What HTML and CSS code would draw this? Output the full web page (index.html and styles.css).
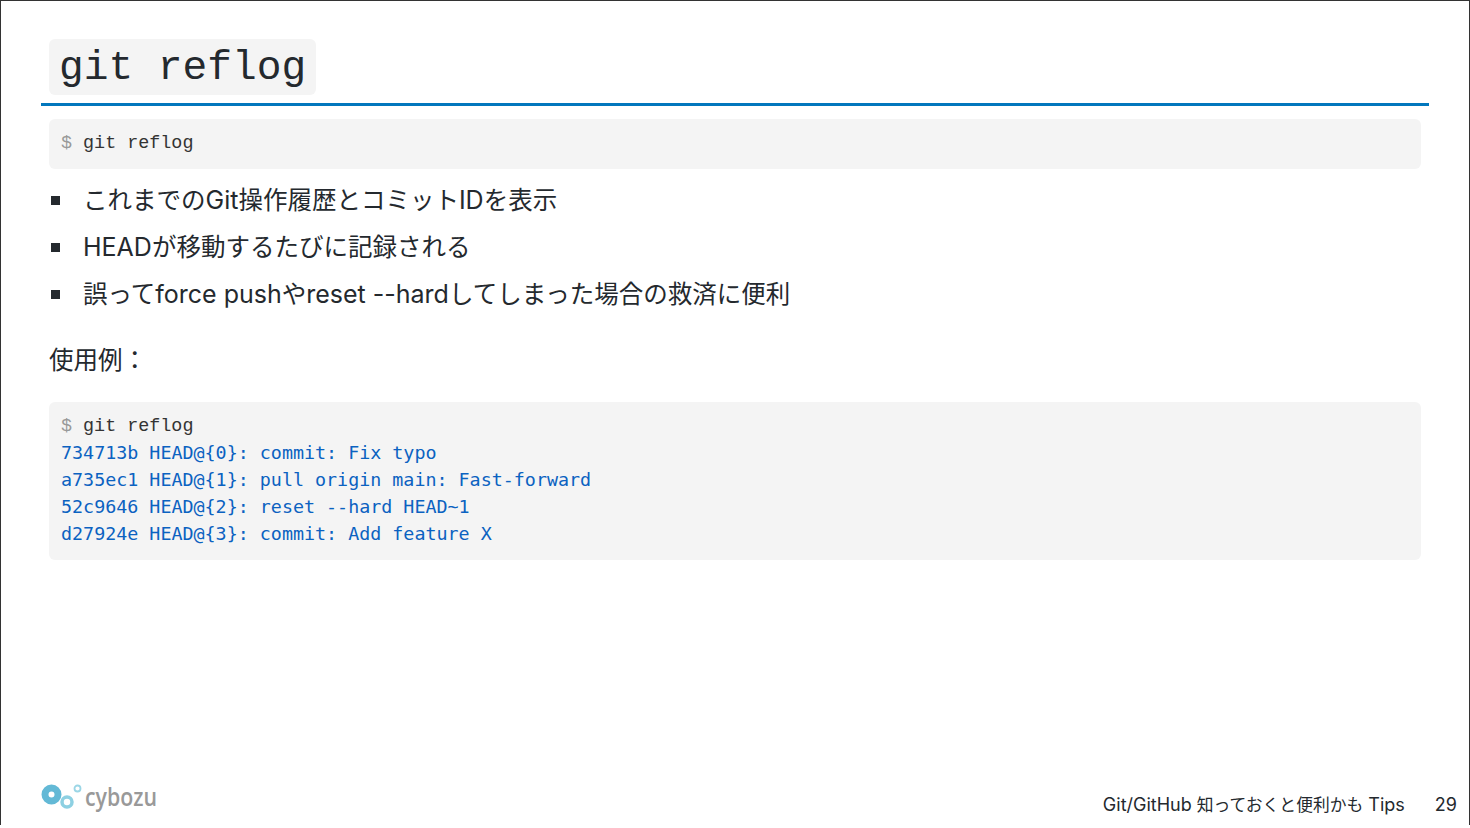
FILE: index.html
```html
<!DOCTYPE html>
<html lang="ja">
<head>
<meta charset="utf-8">
<title>git reflog</title>
<link rel="stylesheet" href="styles.css">
</head>
<body>
<section class="slide">
  <main class="content">
    <h1 class="heading"><code class="heading-code">git reflog</code></h1>
    <pre class="code code-short"><span class="prompt">$</span> git reflog</pre>
    <ul class="points">
      <li class="point">これまでの<span class="lat">Git</span>操作履歴とコミット<span class="lat">ID</span>を表示</li>
      <li class="point"><span class="lat">HEAD</span>が移動するたびに記録される</li>
      <li class="point">誤って<span class="lat">force push</span>や<span class="lat">reset --hard</span>してしまった場合の救済に便利</li>
    </ul>
    <p class="lead">使用例：</p>
    <pre class="code code-long"><span class="prompt">$</span> git reflog<span class="out">734713b HEAD@{0}: commit: Fix typo
a735ec1 HEAD@{1}: pull origin main: Fast-forward
52c9646 HEAD@{2}: reset --hard HEAD~1
d27924e HEAD@{3}: commit: Add feature X</span></pre>
  </main>
  <footer class="foot">
    <div class="logo">
      <svg class="logo-mark" viewBox="0 0 42 28" width="42" height="28" aria-hidden="true">
        <circle cx="10.500" cy="12.500" r="6.500" fill="none" stroke="#63b9d6" stroke-width="7"/>
        <circle cx="26" cy="20" r="5" fill="none" stroke="#8dd0e2" stroke-width="3.500"/>
        <circle cx="36.500" cy="6.500" r="3" fill="none" stroke="#9bd6e6" stroke-width="1.800"/>
      </svg>
      <span class="logo-text">cybozu</span>
    </div>
    <div class="foot-right">
      <span class="foot-title">Git/GitHub <span class="foot-ja">知っておくと便利かも</span> Tips</span>
      <span class="foot-page">29</span>
    </div>
  </footer>
</section>
</body>
</html>
```
FILE: styles.css
```css
* { box-sizing: border-box; }
html, body { margin: 0; padding: 0; background: #fff; }
.slide {
  width: 1470px;
  height: 825px;
  border: 1px solid #333;
  border-bottom: 0;
  display: flex;
  flex-direction: column;
  justify-content: space-between;
  overflow: hidden;
  font-family: Inter, "Noto Sans CJK JP", sans-serif;
  color: #24292e;
}
.content { padding: 38px 40px 0 40px; }
.heading {
  margin: 0 0 13px;
  padding: 0 8px 8px;
  border-bottom: 3px solid #0277bd;
  height: 67px;
  font-weight: 400;
  line-height: 56px;
}
.heading-code {
  display: inline-block;
  vertical-align: top;
  height: 56px;
  padding: 0 10px;
  background: #f4f4f4;
  border-radius: 6px;
  font-family: "Liberation Mono", monospace;
  font-size: 41.200px;
  line-height: 58px;
}
.code {
  margin: 0 8px;
  padding: 11px 12px 0;
  background: #f4f4f4;
  border-radius: 6px;
  font-family: "Liberation Mono", monospace;
  font-size: 18.400px;
  line-height: 27px;
  color: #333;
}
.code-short { height: 50px; }
.code-long { height: 158px; }
.prompt { color: #999; }
.out {
  display: block;
  margin-top: -1px;
  color: #0b62c1;
  font-family: "DejaVu Sans Mono", monospace;
  font-size: 18.350px;
}
.points {
  list-style: none;
  margin: 8px 0 0 8px;
  padding: 0;
}
.point {
  position: relative;
  padding-left: 34px;
  font-size: 24.500px;
  line-height: 47px;
}
.lat { font-size: 25px; }
.point::before {
  content: "";
  position: absolute;
  left: 2px;
  top: 19px;
  width: 9px;
  height: 9px;
  background: #24292e;
}
.lead {
  margin: 19px 0 18px 8px;
  font-size: 24.500px;
  line-height: 47px;
}
.foot {
  display: flex;
  justify-content: space-between;
  align-items: flex-end;
  padding: 0 12px 8px 40px;
}
.logo { display: flex; align-items: center; gap: 2px; margin-bottom: 7px; }
.logo-mark { display: block; }
.logo-text {
  font-family: "Open Sans", sans-serif;
  font-weight: 600;
  font-size: 26px;
  line-height: 28px;
  color: #999;
  transform: scaleX(0.82);
  transform-origin: left center;
}
.foot-right { display: flex; gap: 30px; font-size: 18px; line-height: 24px; }
.foot-ja { font-size: 16.800px; }
```
